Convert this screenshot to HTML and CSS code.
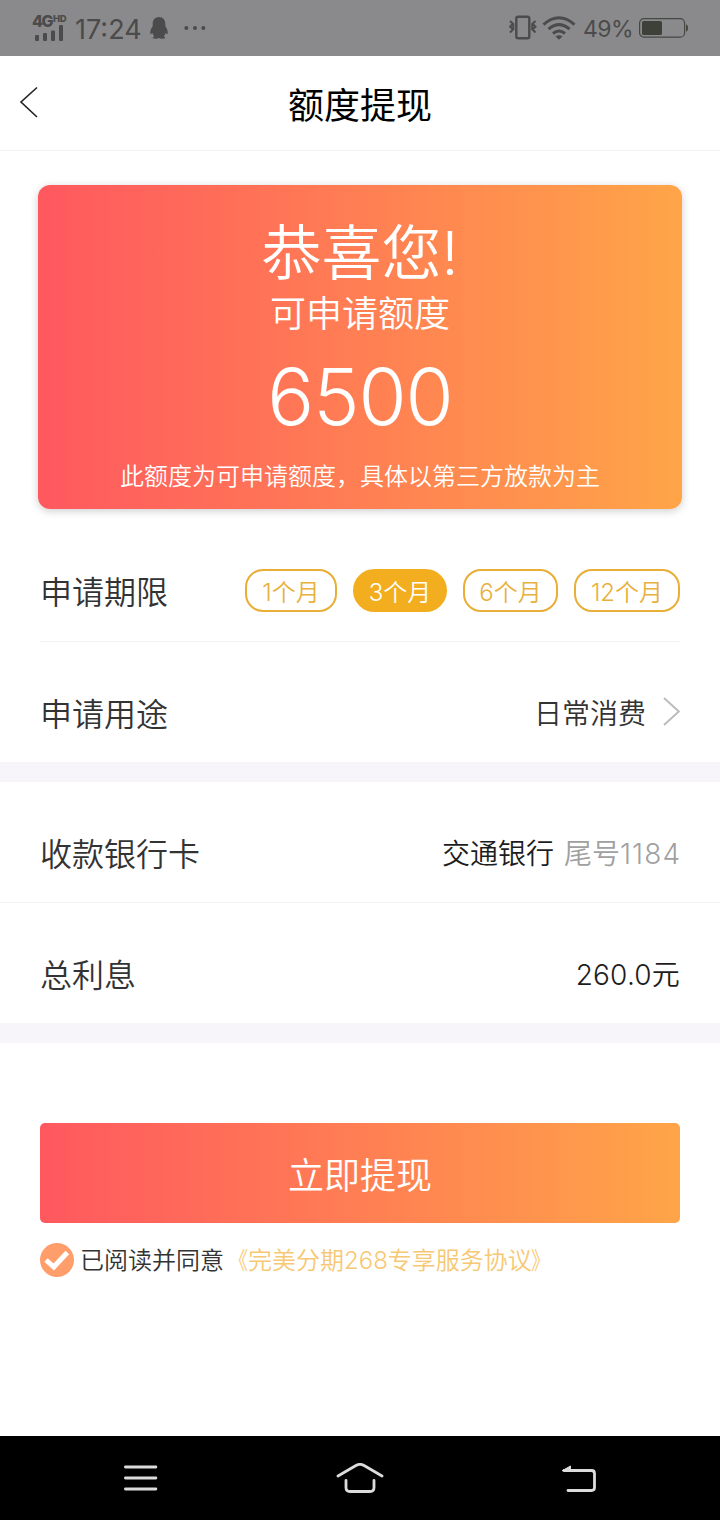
FILE: index.html
```html
<!DOCTYPE html>
<html lang="zh-CN">
<head>
<meta charset="utf-8">
<title>额度提现</title>
<link rel="stylesheet" href="styles.css">
</head>
<body>
<div class="status">
  <div class="signal">
    <div class="network"><span>4G</span><sup>HD</sup></div>
    <svg width="30" height="16" viewBox="0 0 30 16" fill="currentColor"><rect x="1" y="10" width="4" height="6" rx="1"/><rect x="9" y="8" width="4" height="8" rx="1"/><rect x="17" y="5.500" width="4" height="10.500" rx="1"/><rect x="25" y="0" width="4" height="16" rx="1"/></svg>
  </div>
  <span class="time">17:24</span>
  <svg class="qq" width="18" height="22" viewBox="0 0 18 22" fill="currentColor"><path d="M9 0C5 0 2.700 3 2.700 7v2C1 11.500 0 14 .3 16.500c.2 1.200 1 .8 2-.7.4 1.600 1 2.600 2 3.600-1.200.4-1.700 1-1.500 1.700.3.800 4.900.8 6.200-.1 1.300.9 5.900.9 6.200.1.200-.7-.3-1.300-1.500-1.700 1-1 1.600-2 2-3.600 1 1.500 1.800 1.900 2 .7.300-2.500-.7-5-2.400-7.500V7c0-4-2.300-7-6.300-7z"/></svg>
  <svg class="dots" width="22" height="4" viewBox="0 0 22 4" fill="currentColor"><circle cx="2.300" cy="2" r="2"/><circle cx="11" cy="2" r="2"/><circle cx="19.300" cy="2" r="2"/></svg>
  <svg class="vibrate" width="28" height="26" viewBox="0 0 28 26" fill="none" stroke="currentColor" stroke-width="2.400"><rect x="7.300" y="1.800" width="13" height="21.500" rx="1.800"/><path d="M1 6l3 2.800-3 2.900 3 2.900-3 2.800M26.500 6l-3 2.800 3 2.900-3 2.900 3 2.800M4.300 8.500v6.500M23.200 8.500v6.500" stroke-width="2"/></svg>
  <svg class="wifi" width="34" height="24" viewBox="0 0 34 24" fill="none" stroke="currentColor" stroke-width="3"><path d="M1.500 8.600Q17-5 32.500 8.600M6.500 13.200Q17 4 27.500 13.200M11 17.500Q17 12.500 23 17.500"/><path d="M13.500 20.500Q17 18 20.500 20.500L17 23.800z" fill="currentColor" stroke="none"/></svg>
  <span class="percent">49%</span>
  <svg class="battery" width="49" height="20" viewBox="0 0 49 20"><rect x=".6" y=".6" width="45" height="18.600" rx="4.500" fill="none" stroke="#454743" stroke-width="1.200"/><rect x="3" y="3" width="20" height="14" rx="1.500" fill="#3e413a"/><path d="M47 6.500q2 0 2 3.500t-2 3.500z" fill="#454743"/></svg>
</div>
<header class="header">
  <svg class="back" width="20" height="32" viewBox="0 0 20 32" fill="none" stroke="#222" stroke-width="1.600"><path d="M18 1.500L2 16 18 31"/></svg>
  <h1 class="title">额度提现</h1>
</header>
<main class="page">
  <section class="card">
    <div class="congrats">恭喜您!</div>
    <div class="subtitle">可申请额度</div>
    <div class="amount">6500</div>
    <div class="note">此额度为可申请额度，具体以第三方放款为主</div>
  </section>
  <section class="row term">
    <span class="label">申请期限</span>
    <div class="pills"><span class="pill one">1个月</span><span class="pill three active">3个月</span><span class="pill six">6个月</span><span class="pill twelve">12个月</span></div>
  </section>
  <section class="row purpose">
    <span class="label">申请用途</span>
    <span class="value usage">日常消费</span>
    <svg class="chevron" width="17" height="29" viewBox="0 0 17 29" fill="none" stroke="#bcbcbc" stroke-width="2"><path d="M1 1l14.800 13.500L1 28"/></svg>
  </section>
  <div class="divider"></div>
  <section class="row bank">
    <span class="label">收款银行卡</span>
    <span class="value">交通银行</span><span class="value tail">尾号<span class="digits">1184</span></span>
  </section>
  <section class="row interest">
    <span class="label">总利息</span>
    <span class="value total">260.0元</span>
  </section>
  <div class="divider"></div>
  <button class="submit">立即提现</button>
  <div class="agreement">
    <svg width="34" height="34" viewBox="0 0 34 34"><circle cx="17" cy="17" r="17" fill="#ff9d6b"/><path d="M6 17l7.800 7L27.300 9.500" fill="none" stroke="#fff" stroke-width="5"/></svg>
    <span class="read">已阅读并同意</span><span class="link"><span class="open">《</span>完美分期268专享服务协议<span class="close">》</span></span>
  </div>
</main>
<nav class="nav">
  <svg width="34" height="26" viewBox="0 0 34 26"><path d="M1.400 2h30.500M1.400 13h30.500M1.400 24h30.500"/></svg>
  <svg width="48" height="30" viewBox="0 0 48 30"><path d="M2 13.500L19.500 3.300Q24 .4 28.500 3.300L46 13.500M10 18v7q0 4 4 4h20q4 0 4-4v-7" transform="translate(0 -.5)"/></svg>
  <svg width="36" height="28" viewBox="0 0 36 28"><path d="M3 6.500h27.500q3 0 3 3v14q0 3-3 3H7"/><path d="M1.500 6.500L9.500 2v4.500z" fill="#dcdcdc" stroke-width="1"/></svg>
</nav>
</body>
</html>
```
FILE: styles.css
```css
* { box-sizing: border-box; }
body {
  margin: 0;
  width: 720px;
  height: 1520px;
  display: flex;
  flex-direction: column;
  background: #fff;
  color: #333;
  font-family: Inter, "Noto Sans CJK SC", sans-serif;
  font-weight: 350;
}
svg { display: block; flex: none; }
.status {
  height: 56px;
  padding: 0 32px;
  display: flex;
  align-items: center;
  background: #8a8a8c;
  color: #4b4b4b;
  font-weight: 400;
}
.signal { width: 36px; height: 26px; position: relative; }
.signal svg { margin-left: 2px; position: absolute; bottom: 0; }
.network { display: flex; font-size: 16px; font-weight: 800; line-height: 13px; letter-spacing: -1.5px; }
.network sup { font-size: 9.500px; line-height: 8px; letter-spacing: -0.5px; margin-left: 1px; }
.time { margin-left: 7px; width: 66px; font-size: 27px; line-height: 32px; padding-top: 3px; white-space: nowrap; }
.qq { margin-left: 9px; }
.dots { margin-left: 16px; }
.vibrate { margin-left: auto; }
.wifi { margin-left: 5px; }
.percent { margin-left: 7px; width: 48px; font-size: 23px; padding-top: 2px; letter-spacing: -0.5px; }
.battery { margin-left: 8px; }
.header {
  height: 95px;
  border-bottom: 1px solid #f2f2f2;
  display: grid;
  grid-template-columns: 60px 1fr 60px;
  align-items: center;
}
.back { margin-left: 19px; margin-top: -2px; }
.title { margin: 0; padding-top: 5px; font-size: 36px; font-weight: 400; line-height: 50px; text-align: center; color: #000; }
.page { flex: 1; }
.card {
  height: 324px;
  margin: 34px 38px 0;
  padding-top: 32px;
  border-radius: 12px;
  background: linear-gradient(90deg, #ff585f, #ffa548);
  box-shadow: 0 2px 8px rgba(0, 0, 0, .2);
  color: #fff;
  text-align: center;
}
.congrats { font-size: 60px; line-height: 72px; }
.subtitle { font-size: 36px; line-height: 50px; }
.amount { font-size: 78px; line-height: 92px; margin-top: 12px; font-weight: 330; letter-spacing: -1px; }
.note { font-size: 24px; line-height: 34px; margin-top: 17px; }
.row { display: flex; align-items: center; height: 120px; padding: 0 40px; }
.label { font-size: 32px; line-height: 46px; padding-top: 4px; margin-right: auto; }
.value { font-size: 28px; line-height: 40px; padding-top: 3px; color: #1d1d1d; white-space: nowrap; }
.term { height: 133px; margin: 0 40px; padding: 31px 0 0; border-bottom: 1px solid #f3f3f3; }
.term .label { padding-top: 5px; }
.pills { display: flex; gap: 16px; }
.pill {
  height: 43px;
  border: 2px solid #e8ae35;
  border-radius: 18px;
  text-align: center;
  font-size: 24px;
  line-height: 43px;
  color: #e8b03c;
}
.one { width: 92px; }
.three { width: 94px; }
.six { width: 95px; }
.twelve { width: 106px; }
.active { background: #f3ae1f; border-color: #f3ae1f; color: #fff; border-radius: 22px; }
.purpose { padding-top: 21px; }
.usage { margin-right: 17px; color: #333; }
.chevron { margin-top: -3px; }
.divider { height: 20px; background: #f7f5fa; }
.bank { height: 121px; padding-top: 21px; border-bottom: 1px solid #f4f4f4; }
.tail { margin-left: 10px; color: #a0a0a0; }
.digits { letter-spacing: 1.100px; margin-right: -1.100px; }
.total { letter-spacing: 0.2px; }
.interest { padding-top: 21px; }
.submit {
  display: block;
  width: 640px;
  height: 100px;
  margin: 80px 40px 0;
  padding: 6px 0 0;
  border: 0;
  border-radius: 5px;
  background: linear-gradient(90deg, #ff585f, #ffa548);
  color: #fff;
  font: 350 36px/50px Inter, "Noto Sans CJK SC", sans-serif;
}
.agreement { height: 34px; margin: 20px 40px 0; display: flex; align-items: center; font-size: 24px; line-height: 34px; white-space: nowrap; }
.read, .link { margin-top: 1px; }
.read { margin-left: 6px; }
.link { color: #f7c873; }
.open, .close { display: inline-block; line-height: 24px; }
.open { transform: scaleX(.8); transform-origin: right; }
.close { transform: scaleX(.8); transform-origin: left; margin-left: -1px; }
.nav { height: 84px; padding: 0 123px 0 124px; background: #000; display: flex; align-items: center; justify-content: space-between; }
.nav svg { fill: none; stroke: #dcdcdc; stroke-width: 2.800; stroke-linecap: round; stroke-linejoin: round; }
```
